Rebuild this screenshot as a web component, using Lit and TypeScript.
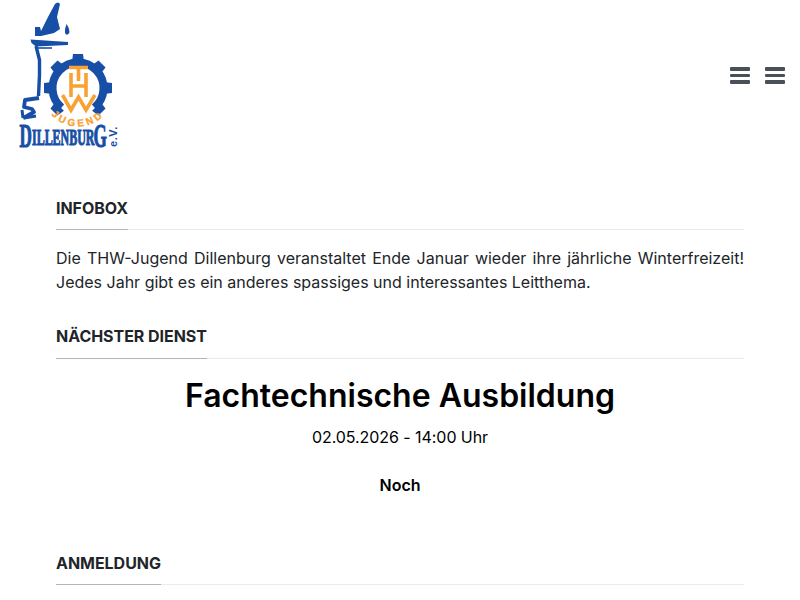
import { LitElement, html, css } from "lit";
import { customElement } from "lit/decorators.js";

@customElement("app-root")
export class AppRoot extends LitElement {
  static styles = css`
    :host { display: block; height: 600px; overflow: hidden; background: #fff; color: #212529; font-family: Inter, sans-serif; font-size: 16px; line-height: 24px; }
    .top { display: flex; justify-content: space-between; height: 196px; padding: 0 15px 0 18px; }
    .logo { display: block; width: 104px; height: 162px; }
    .burgers { display: flex; gap: 15px; padding-top: 67px; height: 17px; }
    .burger { width: 20px; height: 17px; display: flex; flex-direction: column; justify-content: space-between; }
    .burger i { display: block; height: 3.6px; background: #495057; border-radius: 1px; }
    main { padding: 0 56px; }
    .head { margin: 0; font-size: 16px; line-height: 24px; font-weight: 700; letter-spacing: -0.04px; color: #212529; padding-bottom: 9px; border-bottom: 1px solid #e9ecef; }
    .head span { display: inline-block; padding: 0 0 9px; margin-bottom: -10px; border-bottom: 1px solid #adb5bd; }
    .head.up { padding-bottom: 10px; }
    .head.up span { padding-bottom: 10px; margin-bottom: -11px; }
    .info { margin: 16px 0 30px; text-align: justify; }
    h1 { margin: 18px 0 0; text-align: center; font-size: 32px; line-height: 38px; font-weight: 600; color: #000; }
    .date { text-align: center; margin-top: 10px; color: #000; letter-spacing: -0.06px; }
    .noch { text-align: center; margin: 24px 0 54px; font-weight: 600; color: #000; }
    .l { font-family: "Liberation Serif", serif; font-weight: 700; fill: #174ea6; stroke: #174ea6; stroke-width: 1.1; }
    .v { font-family: "Liberation Sans", sans-serif; font-weight: 700; fill: #174ea6; }
    .j { font-family: "Liberation Sans", sans-serif; font-weight: 700; fill: #f9a233; stroke: #f9a233; stroke-width: 0.3; }
  `;
  render() {
    const tooth = "M-5 -34 H5 L6 -26 H-6 Z";
    return html`
      <div class="top">
        <svg class="logo" viewBox="18 0 104 162">
          <path fill="#174ea6" d="M55 4 Q58 1 60 4 L57 17 L60 29 L54 33 L41 36 L35 36 L35 27 L40 27 L41 31 L48 17 Z"/>
          <path fill="#174ea6" d="M66.5 24 Q70.5 30 69 33.5 Q66.5 36 65 33 Q64.5 29 66.5 24 Z"/>
          <path fill="#174ea6" d="M30.5 39.5 L68 42 L68 45 L36 46.5 L31.5 43 Z"/>
          <g fill="none" stroke="#174ea6" stroke-linejoin="round">
            <path stroke-width="3.4" d="M36 46 L39.5 60 L39.5 75 L38.5 96"/>
            <path stroke-width="1.6" d="M38 48 H52"/>
            <path stroke-width="3.8" d="M39 98 L25 100 L24 107 L32 109 L34 112 L27 116 L23 118"/>
            <path stroke-width="3" d="M23 118 L22 110 M24 118 L36 116"/>
          </g>
          <g fill="#174ea6" transform="translate(78 88)">
            <path d=${tooth}/>
            <path transform="rotate(45)" d=${tooth}/>
            <path transform="rotate(90)" d=${tooth}/>
            <path transform="rotate(135)" d=${tooth}/>
            <path transform="rotate(225)" d=${tooth}/>
            <path transform="rotate(270)" d=${tooth}/>
            <path transform="rotate(315)" d=${tooth}/>
            <path fill="none" stroke="#174ea6" stroke-width="8" d="M-16.5 19.5 A25.5 25.5 0 1 1 16.5 19.5"/>
          </g>
          <g fill="none" stroke="#f9a233" stroke-width="3.6">
            <path d="M69 67.5 H88 M78.5 67.5 V81"/>
            <path d="M71 73 V97 M86 73 V97 M71 86 H86"/>
            <path d="M62.5 95 L71 110 L78.5 97 L86 110 L95 95"/>
          </g>
          <path id="arc" fill="none" d="M46 108 A37 37 0 0 0 110 108"/>
          <text class="j" font-size="10" letter-spacing="3" text-anchor="middle"><textPath href="#arc" startOffset="50%">JUGEND</textPath></text>
          <text class="l" font-size="33" transform="translate(19.5 147) scale(0.52 1)">D</text>
          <text class="l" font-size="23" transform="translate(32 145) scale(0.52 1)">ILLENBUR</text>
          <text class="l" font-size="33" transform="translate(93.5 147) scale(0.52 1)">G</text>
          <text class="v" font-size="11" letter-spacing="0.6" transform="translate(116.5 147) rotate(-90)">e.V.</text>
        </svg>
        <div class="burgers">
          <div class="burger"><i></i><i></i><i></i></div>
          <div class="burger"><i></i><i></i><i></i></div>
        </div>
      </div>
      <main>
        <h3 class="head"><span>INFOBOX</span></h3>
        <p class="info">Die THW-Jugend Dillenburg veranstaltet Ende Januar wieder ihre jährliche Winterfreizeit! Jedes Jahr gibt es ein anderes spassiges und interessantes Leitthema.</p>
        <h3 class="head up"><span>NÄCHSTER DIENST</span></h3>
        <h1>Fachtechnische Ausbildung</h1>
        <div class="date">02.05.2026 - 14:00 Uhr</div>
        <div class="noch">Noch</div>
        <h3 class="head"><span>ANMELDUNG</span></h3>
      </main>
    `;
  }
}
